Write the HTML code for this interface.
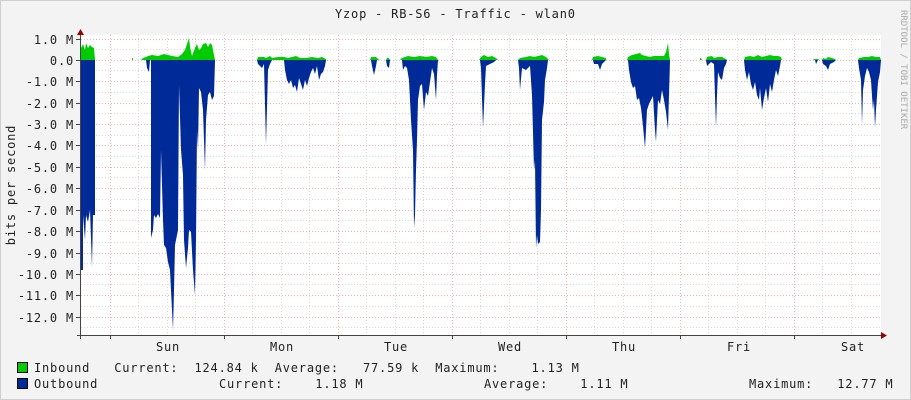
<!DOCTYPE html>
<html><head><meta charset="utf-8"><style>
html,body{margin:0;padding:0;background:#f3f3f3;}
svg{display:block;font-family:"DejaVu Sans Mono","Liberation Mono",monospace;}
.t{letter-spacing:0.8px;}
</style></head><body>
<svg width="911" height="400" viewBox="0 0 911 400" xmlns="http://www.w3.org/2000/svg">
<rect x="0" y="0" width="911" height="400" fill="#f3f3f3"/>
<rect x="0.5" y="0.5" width="910" height="399" fill="none" stroke="#cfcfcf"/>
<rect x="81" y="35" width="800" height="300" fill="#ffffff"/>
<g stroke="#d8d8d8" stroke-width="1" stroke-dasharray="1,2">
<line x1="81" y1="49.5" x2="881" y2="49.5"/><line x1="81" y1="70.5" x2="881" y2="70.5"/>
<line x1="81" y1="92.5" x2="881" y2="92.5"/><line x1="81" y1="113.5" x2="881" y2="113.5"/>
<line x1="81" y1="135.5" x2="881" y2="135.5"/><line x1="81" y1="156.5" x2="881" y2="156.5"/>
<line x1="81" y1="177.5" x2="881" y2="177.5"/><line x1="81" y1="199.5" x2="881" y2="199.5"/>
<line x1="81" y1="220.5" x2="881" y2="220.5"/><line x1="81" y1="242.5" x2="881" y2="242.5"/>
<line x1="81" y1="263.5" x2="881" y2="263.5"/><line x1="81" y1="284.5" x2="881" y2="284.5"/>
<line x1="81" y1="306.5" x2="881" y2="306.5"/><line x1="81" y1="327.5" x2="881" y2="327.5"/>
<line x1="138.5" y1="35" x2="138.5" y2="335"/><line x1="167.5" y1="35" x2="167.5" y2="335"/><line x1="195.5" y1="35" x2="195.5" y2="335"/>
<line x1="252.5" y1="35" x2="252.5" y2="335"/><line x1="281.5" y1="35" x2="281.5" y2="335"/><line x1="309.5" y1="35" x2="309.5" y2="335"/>
<line x1="366.5" y1="35" x2="366.5" y2="335"/><line x1="395.5" y1="35" x2="395.5" y2="335"/><line x1="423.5" y1="35" x2="423.5" y2="335"/>
<line x1="480.5" y1="35" x2="480.5" y2="335"/><line x1="509.5" y1="35" x2="509.5" y2="335"/><line x1="537.5" y1="35" x2="537.5" y2="335"/>
<line x1="594.5" y1="35" x2="594.5" y2="335"/><line x1="623.5" y1="35" x2="623.5" y2="335"/><line x1="651.5" y1="35" x2="651.5" y2="335"/>
<line x1="708.5" y1="35" x2="708.5" y2="335"/><line x1="737.5" y1="35" x2="737.5" y2="335"/><line x1="765.5" y1="35" x2="765.5" y2="335"/>
<line x1="822.5" y1="35" x2="822.5" y2="335"/><line x1="851.5" y1="35" x2="851.5" y2="335"/>
</g>
<g stroke="#f0b0b0" stroke-width="1" stroke-dasharray="1,2">
<line x1="81" y1="39.5" x2="881" y2="39.5"/><line x1="81" y1="60.5" x2="881" y2="60.5"/>
<line x1="81" y1="81.5" x2="881" y2="81.5"/><line x1="81" y1="103.5" x2="881" y2="103.5"/>
<line x1="81" y1="124.5" x2="881" y2="124.5"/><line x1="81" y1="145.5" x2="881" y2="145.5"/>
<line x1="81" y1="167.5" x2="881" y2="167.5"/><line x1="81" y1="188.5" x2="881" y2="188.5"/>
<line x1="81" y1="210.5" x2="881" y2="210.5"/><line x1="81" y1="231.5" x2="881" y2="231.5"/>
<line x1="81" y1="253.5" x2="881" y2="253.5"/><line x1="81" y1="274.5" x2="881" y2="274.5"/>
<line x1="81" y1="295.5" x2="881" y2="295.5"/><line x1="81" y1="317.5" x2="881" y2="317.5"/>
<line x1="110.5" y1="35" x2="110.5" y2="335"/><line x1="224.5" y1="35" x2="224.5" y2="335"/>
<line x1="338.5" y1="35" x2="338.5" y2="335"/><line x1="452.5" y1="35" x2="452.5" y2="335"/>
<line x1="566.5" y1="35" x2="566.5" y2="335"/><line x1="680.5" y1="35" x2="680.5" y2="335"/>
<line x1="794.5" y1="35" x2="794.5" y2="335"/>
</g>
<g fill="#00cc00">
<path d="M81,60 L81,48 L83,44 L85,50 L86,43 L88,48 L90,45 L92,47 L94,48 L95,60Z"/>
<path d="M132,60 L132,58 L133,58 L133,60Z"/>
<path d="M141,60 L143,58 L146,57 L148,56 L152,55 L158,56 L164,54 L168,55 L172,56 L178,57 L182,54 L185,50 L187,44 L189,38 L190,47 L192,56 L195,48 L197,44 L199,50 L201,48 L203,44 L206,43 L208,47 L210,43 L212,45 L214,55 L215,60Z"/>
<path d="M257,60 L258,57 L264,57 L266,58 L270,56 L272,58 L278,57 L284,57 L288,58 L292,57 L296,56 L300,58 L306,58 L312,57 L318,58 L322,57 L326,59 L326,60Z"/>
<path d="M370,60 L371,57 L376,57 L378,59 L380,60Z M386,60 L387,58 L389,58 L390,60Z"/>
<path d="M400,60 L402,58 L408,56 L414,57 L420,56 L426,57 L432,56 L436,57 L438,60Z"/>
<path d="M479,60 L481,57 L484,55 L488,57 L492,56 L496,58 L498,60Z"/>
<path d="M518,60 L520,58 L526,57 L530,56 L534,57 L538,56 L542,55 L546,57 L548,59 L549,60Z"/>
<path d="M592,60 L593,57 L598,56 L602,57 L606,58 L606,60Z"/>
<path d="M627,60 L628,57 L632,55 L636,54 L640,53 L642,55 L646,56 L650,57 L654,56 L660,56 L664,56 L666,52 L668,43 L669,54 L670,60Z"/>
<path d="M700,60 L700,58 L701,58 L702,60Z M706,60 L707,57 L712,56 L714,58 L718,57 L722,57 L726,59 L727,60Z"/>
<path d="M744,60 L745,57 L750,56 L754,57 L758,55 L762,57 L766,56 L770,55 L774,56 L778,56 L781,57 L782,60Z"/>
<path d="M813,60 L814,59 L818,59 L819,60Z M822,60 L823,58 L826,59 L828,57 L832,58 L835,59 L836,60Z"/>
<path d="M858,60 L859,58 L864,57 L868,57 L872,56 L876,57 L880,57 L881,60Z"/>
</g>
<g fill="#002a97">
<path d="M81,60 L81,270 L83,270 L83,215 L85,240 L86,215 L88,222 L90,210 L92,267 L93,215 L95,215 L95,60Z"/>
<path d="M146,60 L147,68 L149,72 L150,60Z"/>
<path d="M151,60 L151,238 L153,230 L154,215 L156,218 L158,214 L160,218 L161,150 L163,220 L164,245 L166,248 L168,262 L170,270 L171,290 L173,330 L174,290 L175,245 L176,240 L178,230 L179,85 L181,150 L183,175 L184,240 L186,268 L188,248 L189,230 L191,232 L193,270 L195,295 L196,240 L197,130 L198,150 L199,88 L201,92 L203,110 L205,170 L206,120 L208,95 L210,92 L212,100 L214,96 L215,60Z"/>
<path d="M257,60 L258,64 L262,68 L264,64 L266,145 L268,70 L270,64 L272,60Z"/>
<path d="M284,60 L285,70 L287,80 L289,84 L291,80 L293,88 L295,85 L297,92 L299,78 L301,84 L303,90 L305,80 L307,86 L309,78 L311,72 L313,68 L315,74 L317,66 L319,80 L321,74 L323,72 L325,66 L326,60Z"/>
<path d="M371,60 L372,66 L374,75 L376,66 L377,60Z M386,60 L387,66 L389,68 L390,60Z"/>
<path d="M402,60 L403,70 L405,66 L407,68 L409,80 L411,120 L413,150 L414,228 L415,215 L416,170 L417,140 L418,100 L420,86 L422,84 L424,110 L426,92 L428,96 L430,82 L432,68 L434,74 L436,100 L437,75 L438,60Z"/>
<path d="M480,60 L481,68 L483,128 L485,84 L486,66 L490,64 L494,62 L496,60Z"/>
<path d="M518,60 L519,68 L520,90 L522,68 L526,70 L530,66 L532,95 L534,170 L535,160 L536,248 L537,235 L538,244 L540,242 L541,210 L542,120 L544,102 L545,80 L547,68 L548,60Z"/>
<path d="M593,60 L594,64 L598,64 L600,70 L602,64 L606,60Z"/>
<path d="M628,60 L629,70 L631,82 L633,88 L635,86 L637,100 L639,98 L641,108 L643,126 L645,148 L646,130 L647,110 L649,104 L651,100 L653,96 L655,130 L656,142 L657,120 L658,100 L660,104 L662,90 L664,100 L666,112 L668,130 L669,95 L670,60Z"/>
<path d="M706,60 L707,66 L709,64 L711,62 L714,64 L716,128 L717,95 L718,72 L720,78 L722,80 L724,68 L726,64 L727,60Z"/>
<path d="M744,60 L745,70 L747,80 L749,72 L751,84 L753,90 L755,82 L757,95 L759,100 L760,88 L762,110 L764,98 L766,88 L768,102 L770,84 L772,92 L774,80 L776,70 L778,76 L780,66 L781,60Z"/>
<path d="M815,60 L816,64 L818,60Z M822,60 L823,64 L826,66 L828,70 L830,64 L834,62 L836,60Z"/>
<path d="M858,60 L859,68 L861,80 L862,125 L863,90 L865,76 L867,68 L869,72 L871,80 L872,96 L873,110 L874,100 L875,128 L876,110 L877,96 L878,82 L880,72 L881,60Z"/>
</g>
<line x1="77" y1="335.5" x2="886" y2="335.5" stroke="#444"/>
<line x1="80.5" y1="31" x2="80.5" y2="339" stroke="#444"/>
<path d="M77,35 L80.5,29 L84,35Z" fill="#990000"/>
<path d="M881,332 L887,335.5 L881,339Z" fill="#990000"/>
<g stroke="#444">
<line x1="80" y1="39.5" x2="76" y2="39.5"/><line x1="80" y1="60.5" x2="76" y2="60.5"/><line x1="80" y1="81.5" x2="76" y2="81.5"/><line x1="80" y1="103.5" x2="76" y2="103.5"/><line x1="80" y1="124.5" x2="76" y2="124.5"/><line x1="80" y1="145.5" x2="76" y2="145.5"/><line x1="80" y1="167.5" x2="76" y2="167.5"/><line x1="80" y1="188.5" x2="76" y2="188.5"/><line x1="80" y1="210.5" x2="76" y2="210.5"/><line x1="80" y1="231.5" x2="76" y2="231.5"/><line x1="80" y1="253.5" x2="76" y2="253.5"/><line x1="80" y1="274.5" x2="76" y2="274.5"/><line x1="80" y1="295.5" x2="76" y2="295.5"/><line x1="80" y1="317.5" x2="76" y2="317.5"/>
<line x1="110.5" y1="335" x2="110.5" y2="339"/><line x1="224.5" y1="335" x2="224.5" y2="339"/><line x1="338.5" y1="335" x2="338.5" y2="339"/><line x1="452.5" y1="335" x2="452.5" y2="339"/><line x1="566.5" y1="335" x2="566.5" y2="339"/><line x1="680.5" y1="335" x2="680.5" y2="339"/><line x1="794.5" y1="335" x2="794.5" y2="339"/>
</g>
<g font-size="12" fill="#222" class="t">
<text x="335" y="18">Yzop - RB-S6 - Traffic - wlan0</text>
<g text-anchor="end">
<text x="74" y="44">1.0 M</text><text x="74" y="65">0.0</text><text x="74" y="86">-1.0 M</text><text x="74" y="108">-2.0 M</text><text x="74" y="129">-3.0 M</text><text x="74" y="150">-4.0 M</text><text x="74" y="172">-5.0 M</text><text x="74" y="193">-6.0 M</text><text x="74" y="215">-7.0 M</text><text x="74" y="236">-8.0 M</text><text x="74" y="258">-9.0 M</text><text x="74" y="279">-10.0 M</text><text x="74" y="300">-11.0 M</text><text x="74" y="322">-12.0 M</text>
</g>
<g text-anchor="middle">
<text x="168" y="351">Sun</text><text x="282" y="351">Mon</text><text x="396" y="351">Tue</text><text x="510" y="351">Wed</text><text x="624" y="351">Thu</text><text x="739" y="351">Fri</text><text x="853" y="351">Sat</text>
</g>
<text transform="translate(15,185) rotate(-90)" text-anchor="middle">bits per second</text>
<rect x="17.5" y="362.5" width="10" height="10" fill="#00cc00" stroke="#000"/>
<rect x="17.5" y="378.5" width="10" height="10" fill="#002a97" stroke="#000"/>
<text x="34" y="372" xml:space="preserve">Inbound   Current:  124.84 k  Average:   77.59 k  Maximum:    1.13 M</text>
<text x="34" y="388">Outbound</text>
<text x="219" y="388" xml:space="preserve">Current:    1.18 M</text>
<text x="484" y="388" xml:space="preserve">Average:    1.11 M</text>
<text x="749" y="388" xml:space="preserve">Maximum:   12.77 M</text>
</g>
<text transform="translate(901,10) rotate(90)" font-size="9" fill="#aaa">RRDTOOL / TOBI OETIKER</text>
</svg>
</body></html>
